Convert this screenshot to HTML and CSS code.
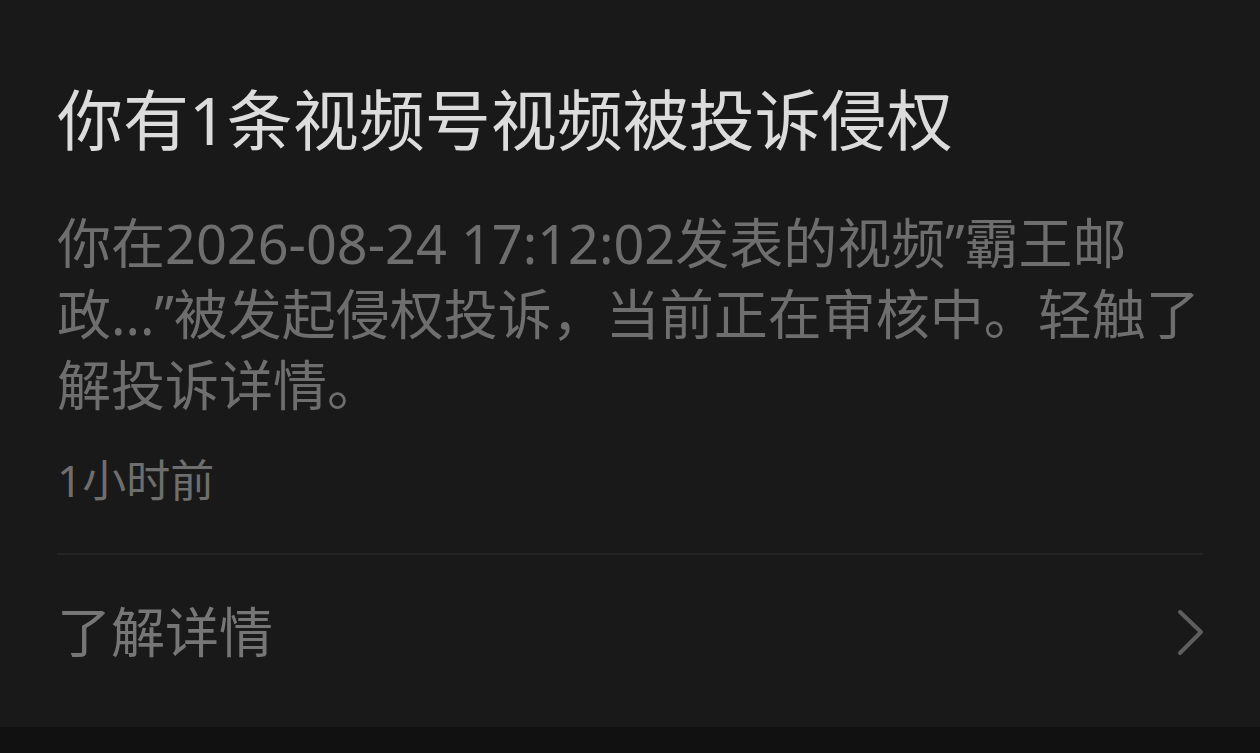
FILE: index.html
```html
<!DOCTYPE html>
<html lang="zh-CN">
<head>
<meta charset="utf-8">
<title>侵权投诉通知</title>
<link rel="stylesheet" href="styles.css">
</head>
<body>
<div class="card">
  <div class="main">
    <h1 class="title">你有1条视频号视频被投诉侵权</h1>
    <p class="desc">你在2026-08-24 17:12:02发表的视频”霸王邮<br>政...”被发起侵权投诉，当前正在审核中。轻触了<br>解投诉详情。</p>
    <div class="time">1小时前</div>
  </div>
  <div class="row">
    <span class="row-label">了解详情</span>
    <svg class="chev" width="30" height="50" viewBox="0 0 30 50" aria-hidden="true">
      <path d="M4 4 L25 24 L4 45" fill="none" stroke="#5e5e5e" stroke-width="4" stroke-linecap="round" stroke-linejoin="round"/>
    </svg>
  </div>
</div>
<div class="bottom"></div>
</body>
</html>
```
FILE: styles.css
```css
html, body {
  margin: 0;
  padding: 0;
  background: #191919;
  width: 1260px;
  height: 753px;
  overflow: hidden;
  font-family: "Noto Sans", "Noto Sans CJK SC", sans-serif;
}
.card {
  height: 727px;
  padding: 0 57px;
  box-sizing: border-box;
  display: flex;
  flex-direction: column;
  background: #191919;
}
.main {
  padding-top: 79px;
  padding-bottom: 45px;
  border-bottom: 2px solid #242424;
}
.title {
  margin: 0;
  font-size: 66px;
  line-height: 80px;
  font-weight: 400;
  color: #dcdcdc;
  white-space: nowrap;
}
.desc {
  margin: 49px 0 0;
  font-size: 54px;
  line-height: 71px;
  color: #6e6e6e;
  white-space: nowrap;
}
.time {
  margin-top: 31px;
  font-size: 44px;
  line-height: 56px;
  color: #6e6e6e;
}
.row {
  flex: 1;
  display: flex;
  align-items: flex-start;
  justify-content: space-between;
  padding-top: 42px;
}
.row-label {
  font-size: 54px;
  line-height: 71px;
  color: #767676;
}
.chev {
  display: block;
  margin-top: 11px;
  margin-right: -3px;
}
.bottom {
  height: 26px;
  background: #111111;
}
```
